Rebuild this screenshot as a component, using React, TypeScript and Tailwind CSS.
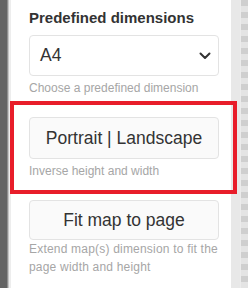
import React from "react";

export default function App() {
  return (
    <div className="relative flex h-[288px] w-[248px] overflow-hidden bg-white font-['Liberation_Sans',Arial,sans-serif]">
      <div className="w-[7px] bg-[#646464]" />
      <div className="w-[1px] bg-[#8e8e8e]" />
      <div className="w-[1px] bg-[#c4c4c4]" />
      <div className="w-[2px] bg-[#ededed]" />
      <div className="flex w-[220px] flex-col pl-[18px] pr-[12px]">
        <div className="mt-[8px] text-[15px] font-bold leading-[20px] text-[#333]">
          Predefined dimensions
        </div>
        <div className="mt-[7px] flex h-[41px] items-center justify-between rounded-[4px] border border-[#e3e3e3] bg-white pl-[10px] pr-[7px]">
          <span className="text-[17.5px] leading-none text-[#333]">A4</span>
          <svg width="12" height="8" viewBox="0 0 12 8" fill="none">
            <path d="M1.5 1.5 L6 6 L10.5 1.5" stroke="#333" strokeWidth="2" strokeLinecap="round" strokeLinejoin="round" />
          </svg>
        </div>
        <div className="mt-[3px] text-[12px] leading-[18px] text-[#a6a6a6]">
          Choose a predefined dimension
        </div>
        <div className="mt-[20px] flex h-[42px] items-center justify-center rounded-[4px] border border-[#e3e3e3] bg-[#fafafa] text-[17.5px] text-[#333]">
          Portrait | Landscape
        </div>
        <div className="mt-[3px] text-[12px] leading-[18px] text-[#a6a6a6]">
          Inverse height and width
        </div>
        <div className="mt-[20px] flex h-[40px] items-center justify-center rounded-[4px] border border-[#e3e3e3] bg-[#fafafa] text-[17.5px] text-[#333]">
          Fit map to page
        </div>
        <div className="text-[12px] leading-[18px] tracking-[0.2px] text-[#a6a6a6]">
          Extend map(s) dimension to fit the page width and height
        </div>
      </div>
      <div className="w-[9px] bg-[#e8e8e8]" />
      <div className="w-[1px] bg-[#ececec]" />
      <div className="w-[7px] bg-[repeating-linear-gradient(to_bottom,#cfcfcf_0px,#cfcfcf_6px,#e4e4e4_6px,#e4e4e4_12px)]" />
      <div className="pointer-events-none absolute left-[10px] top-[101px] h-[93px] w-[227px] border-4 border-[#e81d2a]" />
    </div>
  );
}
